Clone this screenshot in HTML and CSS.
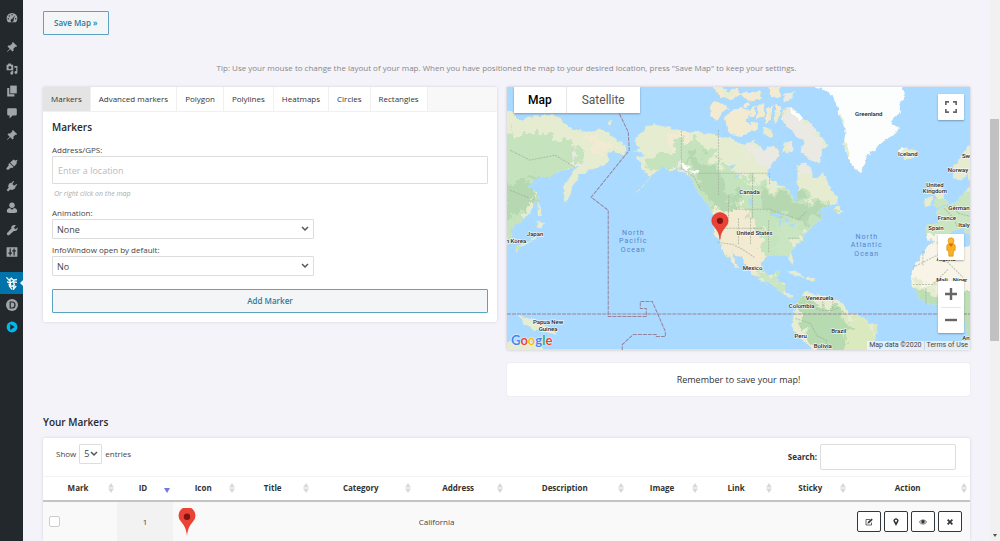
FILE: index.html
```
<!DOCTYPE html>
<html lang="en">
<head>
<meta charset="utf-8" />
<title>Edit Map</title>
<link rel="stylesheet" href="styles.css">
</head>
<body>
<nav class="sidebar" aria-label="Admin menu">
  <a href="#" class="menu-item" title="Dashboard"><svg viewBox="0 0 20 20"><path fill-rule="evenodd" d="M3.8 17h12.4A9 9 0 1 0 3.8 17zM10 3.500a1.200 1.200 0 1 1 0 2.400 1.200 1.200 0 0 1 0-2.400zM5.500 5.500a1.200 1.200 0 1 1 0 2.400 1.200 1.200 0 0 1 0-2.400zM3.800 10a1.200 1.200 0 1 1 0 2.400 1.200 1.200 0 0 1 0-2.400zM16.200 10a1.200 1.200 0 1 1 0 2.400 1.200 1.200 0 0 1 0-2.400zM15 5.500l-2.500 7.500a2.500 2.500 0 1 1-2.400-1.500z"/></svg></a>
  <a href="#" class="menu-item group" title="Posts"><svg viewBox="0 0 20 20"><path d="M11.500 1.500l7 7-1.500 1.500-1.300-.4-3.400 3.400.3 3.200-1.800 1.300-3.600-3.700L2 18.500 1.500 18l4.700-5.200L2.500 9.200 3.800 7.500l3.200.2 3.500-3.400-.4-1.400z"/></svg></a>
  <a href="#" class="menu-item" title="Media"><svg viewBox="0 0 20 20"><path fill-rule="evenodd" d="M1 3h2l1-2h4l1 2h3v9H1zM6.500 5a2.500 2.500 0 1 0 0 5 2.500 2.500 0 0 0 0-5z"/><path d="M14 5h5v11a2.400 2.400 0 1 1-2-2.500V8h-3zM9 13h3v4a2.400 2.400 0 1 1-2-2.300L9 14.500z"/></svg></a>
  <a href="#" class="menu-item" title="Pages"><svg viewBox="0 0 20 20"><path d="M7 1h11v13H7z"/><path d="M2 5h3.500v10.500H14V19H2z"/></svg></a>
  <a href="#" class="menu-item" title="Comments"><svg viewBox="0 0 20 20"><path d="M4 2h12a2 2 0 0 1 2 2v8a2 2 0 0 1-2 2h-5l-5 5v-5H4a2 2 0 0 1-2-2V4a2 2 0 0 1 2-2z"/></svg></a>
  <a href="#" class="menu-item" title="Projects"><svg viewBox="0 0 20 20"><path d="M11.500 1.500l7 7-1.500 1.500-1.300-.4-3.400 3.400.3 3.200-1.800 1.300-3.600-3.700L2 18.500 1.500 18l4.700-5.200L2.500 9.200 3.800 7.500l3.200.2 3.500-3.400-.4-1.400z"/></svg></a>
  <a href="#" class="menu-item group" title="Appearance"><svg viewBox="0 0 20 20"><path d="M12.500 2.500l3 1.500 4-1-2 4 .5 2-4.500 5L7 7.500zM6 8.500l6.500 6.500-1.800 1.800-2.500-.5L4 19.500c-2 1-4-1-3-3l3.500-4-.5-2z"/></svg></a>
  <a href="#" class="menu-item" title="Plugins"><svg viewBox="0 0 20 20"><path d="M12 1.500l1.500 1.200-3 4 3 3 4-3L18.700 8l-3.500 3.500.8 1.500c-2.500 3-6 4.500-9 2.800L3.500 19 1 16.500 4.500 13C2.500 10 4.500 6.500 7 4.500l1.500.8z"/></svg></a>
  <a href="#" class="menu-item" title="Users"><svg viewBox="0 0 20 20"><circle cx="10" cy="5.500" r="4.500"/><path d="M1.500 17v-3c0-2.500 3-4 5-4l3.500 3 3.500-3c2 0 5 1.500 5 4v3c-5 2-12 2-17 0z"/></svg></a>
  <a href="#" class="menu-item" title="Tools"><svg viewBox="0 0 20 20"><path d="M16.500 2.500L13.300 5.700l1 2 2 1L19.300 5.500c.8 4-2.500 7-6.300 6L5.500 18.500c-2 1.300-5-1.200-3.700-3.700L9 7.500C8 3.500 12 .5 16.500 2.500z"/></svg></a>
  <a href="#" class="menu-item" title="Settings"><svg viewBox="0 0 20 20"><path fill-rule="evenodd" d="M1 2h18v16H1zM6 4v7H4v2h2v3h2v-3h2v-2H8V4zM12.500 4v3h-2v2h2v7h2V9h2V7h-2V4z"/></svg></a>
  <a href="#" class="menu-item group active" title="Maps"><svg viewBox="0 0 20 20"><path fill="none" stroke="#fff" stroke-width="1.900" d="M2 2l4 4 3-3 3 3 5-1M3 8l4 2 4-2 6 1M5 12l5 3 4-3M7 6l1 7M12 6l1 6-1 7 4-5M6 14l4 5"/></svg></a>
  <a href="#" class="menu-item" title="Divi"><svg viewBox="0 0 20 20"><circle cx="10" cy="10" r="10"/><path fill="none" stroke="#23282d" stroke-width="2" d="M7 5h3a5 5 0 0 1 0 10H7z"/></svg></a>
  <a href="#" class="menu-item play" title="Videos"><svg viewBox="0 0 20 20"><circle cx="10" cy="10" r="9"/><path fill="#23282d" d="M7 5l7.500 5L7 15z"/></svg></a>
</nav>

<main class="content">
  <button type="button" class="btn save">Save Map »</button>
  <p class="tip">Tip: Use your mouse to change the layout of your map. When you have positioned the map to your desired location, press "Save Map" to keep your settings.</p>

  <div class="editor">
    <section class="card panel">
      <div class="tabs" role="tablist">
        <button type="button" role="tab" class="tab selected" aria-selected="true">Markers</button>
        <button type="button" role="tab" class="tab">Advanced markers</button>
        <button type="button" role="tab" class="tab">Polygon</button>
        <button type="button" role="tab" class="tab">Polylines</button>
        <button type="button" role="tab" class="tab">Heatmaps</button>
        <button type="button" role="tab" class="tab">Circles</button>
        <button type="button" role="tab" class="tab">Rectangles</button>
      </div>
      <form class="marker-form">
        <h2>Markers</h2>
        <label for="address">Address/GPS:</label>
        <input type="text" id="address" placeholder="Enter a location">
        <em class="hint">Or right click on the map</em>
        <label for="animation">Animation:</label>
        <select id="animation"><option>None</option><option>Bounce</option><option>Drop</option></select>
        <label for="infoopen">InfoWindow open by default:</label>
        <select id="infoopen"><option>No</option><option>Yes</option></select>
        <button type="button" class="btn add">Add Marker</button>
      </form>
    </section>

    <div class="map-column">
      <div class="map">
        <svg class="map-canvas" viewBox="507 87 462 262" preserveAspectRatio="xMidYMid slice" role="img" aria-label="World map">
          <defs>
            <filter id="rough" x="-5%" y="-5%" width="110%" height="110%">
              <feTurbulence type="fractalNoise" baseFrequency="0.18" numOctaves="3" seed="4" result="n"/>
              <feDisplacementMap in="SourceGraphic" in2="n" scale="5" xChannelSelector="R" yChannelSelector="G"/>
            </filter>
            <filter id="patch" x="-10%" y="-10%" width="120%" height="120%">
              <feTurbulence type="fractalNoise" baseFrequency="0.09" numOctaves="4" seed="9" result="n"/>
              <feDisplacementMap in="SourceGraphic" in2="n" scale="30" xChannelSelector="R" yChannelSelector="G"/>
            </filter>
            <clipPath id="land">
              <!-- Asia -->
              <path d="M500 108L513 112 517 120 522 121 528 117 540 116 547 114 555 116 562 118 563 123 575 130 585 132 600 129 610 134 617 140 626 146 627 151 624 156 618 152 613 150 608 153 609 160 606 164 598 167 590 170 580 174 577 180 572 186 570 195 566 202 564 201 563 190 567 180 574 169 578 165 568 169 555 172 550 177 540 176 533 181 527 187 532 189 536 193 535 205 530 212 525 218 517 224 512 229 511 232 513 240 509 245 500 244z"/>
              <path d="M538 195L540 208 541 216 538 215 537 203zM538 220L544 224 540 228 536 227zM537 230L536 238 528 243 520 247 516 252 516 247 524 243 532 239zM606 122l6-1-3 4z"/>
              <!-- Papua and Australia -->
              <path d="M519 315L530 318 541 322 551 328 558 335 545 331 533 330 523 323zM500 346L515 340 522 343 530 341 541 344 543 355 500 355z"/>
              <!-- North and Central America -->
              <path d="M633 150L640 148 636 144 634 139 641 132 648 126 654 123 660 126 672 128 690 133 697 130 704 135 712 134 720 137 730 138 737 143 745 145 752 140 759 147 764 150 771 145 777 148 780 155 772 162 768 170 766 175 772 181 782 186 790 190 791 199 795 202 796 196 798 188 797 180 797 165 805 163 811 168 812 176 817 178 822 172 826 180 831 190 837 197 838 203 831 205 822 208 815 213 822 213 820 219 812 226 805 232 801 240 795 246 790 250 792 258 793 265 789 261 787 255 780 255 772 255 765 257 761 264 763 272 769 275 775 272 779 270 776 279 783 282 786 292 793 296 790 298 782 293 773 285 762 281 752 273 746 265 741 258 734 253 730 249 732 256 739 268 735 266 727 256 722 249 719 241 714 233 712 216 709 205 700 196 694 183 686 173 678 170 668 169 662 167 655 172 650 178 642 188 632 195 645 184 649 177 648 172 640 170 641 164 636 156 645 155z"/>
              <path d="M832 210L838 205 843 212 838 215zM786 271L795 270 804 277 796 275zM806 277l10 1-3 3-8-1z"/>
              <!-- Arctic islands -->
              <path d="M711 103L718 102 728 108 722 113 716 121 710 116zM724 118L731 110 742 108 750 112 746 121 751 130 742 136 730 134 727 126zM713 87L722 86 726 91 736 88 741 94 731 100 720 96zM740 93L758 91 762 98 748 101zM757 105L765 104 763 116 756 121zM775 105L781 107 779 119 773 124zM783 109L792 108 800 115 811 124 819 134 827 145 821 149 818 163 810 160 800 151 803 142 795 135 785 126 781 118zM783 143l7-2 3 8-6 6-5-5zM768 88L780 85 779 98 770 97zM783 94l11-3-2 8-9 2zM750 122l9 1-2 7-8-1zM752 107l4-1-3 12-4-2zM767 108l5-2-2 14-5 4-1-6zM762 126l10 4-1 8-7-4zM744 103l6 1-3 4-4-1z"/>
              <path d="M812 80L815 88 823 89 832 95 836 105 840 118 845 130 843 145 846 155 851 165 860 173 864 165 866 155 875 149 882 141 892 135 899 128 890 124 893 118 900 113 898 105 904 97 901 90 903 80z"/>
              <path d="M897 150L905 147 916 151 914 157 904 160z"/>
              <!-- Europe and Africa -->
              <path d="M975 142L966 147 959 158 952 168 953 178 960 181 966 174 969 184 963 194 955 202 944 207 935 210 938 219 936 224 927 224 924 232 927 240 936 242 945 235 954 230 961 228 969 236 975 236zM933 182L940 185 942 196 947 203 937 208 932 205 936 198 931 190zM924 197l7 0 0 9-8 2z"/>
              <path d="M937 242L928 245 921 255 914 266 910 274 911 285 918 297 928 304 937 304 950 303 960 310 965 325 968 345 975 355 975 245 962 247 952 240z"/>
              <!-- South America -->
              <path d="M793 313L797 303 800 296 806 291 815 294 825 296 838 300 846 308 848 313 858 315 865 320 875 325 877 332 872 342 868 355 818 355 806 343 798 335 791 325z"/>
            </clipPath>
          </defs>
          <rect x="507" y="87" width="462" height="262" fill="#aadaff"/>
          <g filter="url(#rough)">
            <g clip-path="url(#land)">
              <rect x="490" y="70" width="500" height="300" fill="#e5ecd0"/>
              <g filter="url(#patch)">
                <path fill="#c5e3bd" d="M500 135h45l30 10 5 20-20 15-25 10-20 60h-20zM650 160l30-20 20 0 25 30 60 20 60 20-50 30-20 35-20-10-8-40-60-20-40-35z"/>
                <path fill="#b5d8b1" d="M500 185l35-10 5 25-40 20zM688 155l20 5 30 40-15 15-20-20zM755 185l30 10 50 15-20 10-50-10z"/>
                <path fill="#f2ead1" d="M585 138l20 0 12 12-20 4zM705 215l42-10 10 28 7 30-15 10-30-25zM705 95l70-15 15 20-40 40-40-10zM670 135l20-5-5 12-20 0z"/>
                <path fill="#c9e5c1" d="M775 225l30-5-15 40-15-5zM760 273l20 5 10 20-30-15zM920 205l60-20v55l-30-5-30 10z"/>
                <path fill="#ebe9e3" d="M745 150l20-5 35 20-8 12-20-2zM785 85l50 80-30 10-25-40zM676 165l12 3-2 7-12-3zM570 165l10-8 4 8z"/>
                <path fill="#b7dbb1" d="M795 296l40 10 25 20-10 30h-45z"/>
                <path fill="#dbe9bf" d="M845 315l35 10-10 35h-25z"/>
                <path fill="#f8f4e7" d="M900 238h80v57l-75-14z"/>
                <path fill="#bcdfb5" d="M905 288l40 5 40 0v60h-30z"/>
                <path fill="#f0ead0" d="M788 320l24 25v12h-30z"/>
              </g>
              <path fill="#fcfdfd" d="M805 75h110v60l-45 50-20-20z"/>
              <path fill="#e1ecca" d="M843 139l5 10-1 10-7-12zM840 112l4 10-5 2z"/>
              <path fill="#fff" d="M680 163l10 3-4 6zM690 170l8 1-3 4zM788 108l15 8-4 5z"/>
            </g>
          </g>
          <!-- lakes -->
          <path fill="#aadaff" d="M770 214l8-2 5 3-6 2zM779 218l2 1-1 7-2-1zM784 216l5 4-4 3zM788 225l7-2-3 4zM728 166l8-2-5 5zM733 177l9-5-6 6zM748 199l4-1 0 9-3-2z"/>
          <!-- borders -->
          <path fill="none" stroke="#9fae99" stroke-width="1" stroke-dasharray="2 1" stroke-opacity=".7" d="M681 131v37l12 8 8 15M692 173h76M718 130v66M728 196v22M752 173v45M735 209h34l14 5 15 5 8-8M717 242l15 2 10 5 12 8M769 173v12M738 218v26M750 218v26M720 228h45M768 220v32M788 238h12M510 150l20 10 25-5 20 12M510 190l25 10M808 297l3 10 10 3 10 0 8-3M795 318l15 5 6 12 10 5 0 10M822 298v10M832 300v8M912 267l30-15M922 251v14M912 284h20l15-15M940 255l22 22M945 290v14M925 288v16M955 285v20M943 208l10 10 3 8M953 205l4 8 12 3"/>
          <path class="dateline" d="M615 105l13 27 1 18-38 47 17 13v106h38v-8h-6v-7h12l13 30v5h-9v-2h-23l-11 10v10"/>
          <path class="dateline" d="M507 313.500h462"/>
          <g class="countries">
            <text x="535" y="236">Japan</text><text x="516" y="243">h Korea</text>
            <text x="548" y="324">Papua New</text><text x="548" y="330">Guinea</text>
            <text x="749" y="194">Canada</text><text x="754" y="235">United States</text><text x="752" y="270">Mexico</text>
            <text x="868" y="116">Greenland</text><text x="907" y="156">Iceland</text><text x="965" y="158">Sw</text>
            <text x="957" y="172">Norway</text><text x="934" y="187">United</text><text x="934" y="193">Kingdom</text>
            <text x="958" y="210">German</text><text x="946" y="220">France</text><text x="963" y="227">Italy</text>
            <text x="935" y="230">Spain</text><text x="945" y="261">Algeria</text><text x="941" y="282">Mali</text><text x="959" y="282">Niger</text>
            <text x="819" y="300">Venezuela</text><text x="801" y="308">Colombia</text><text x="838" y="332">Brazil</text>
            <text x="800" y="337">Peru</text><text x="822" y="347">Bolivia</text><text x="965" y="339">An</text>
          </g>
          <g class="oceans">
            <text x="633" y="235">North</text><text x="633" y="243">Pacific</text><text x="633" y="252">Ocean</text>
            <text x="866" y="239">North</text><text x="866" y="247">Atlantic</text><text x="866" y="256">Ocean</text>
          </g>
          <path fill="#ea4335" stroke="#c5221f" stroke-width=".5" d="M719.500 239c-.7-7-3-9-5.500-12.500a8.200 8.200 0 1 1 11 0c-2.500 3.500-4.800 5.500-5.500 12.500z"/>
          <circle cx="719.500" cy="220.500" r="3.100" fill="#811411"/>
        </svg>
        <div class="map-types">
          <button type="button" class="current">Map</button>
          <button type="button">Satellite</button>
        </div>
        <button type="button" class="map-btn fullscreen" aria-label="Toggle fullscreen"><svg viewBox="0 0 18 18" width="12" height="12"><path d="M0 0v6h2.500V2.500H6V0zm18 0v6h-2.500V2.500H12V0zM0 18v-6h2.500v3.500H6V18zm18 0v-6h-2.500v3.500H12V18z"/></svg></button>
        <div class="map-side">
          <button type="button" class="map-btn" aria-label="Street View"><svg viewBox="0 0 14 24" width="12" height="20"><path fill="#f9b21d" stroke="#d98c0e" stroke-width=".8" d="M4 8h6l2 2v6l-2 .5L9.500 23h-5L4 16.500 2 16v-6z"/><circle cx="7" cy="4.500" r="3.500" fill="#fbbc2a" stroke="#d98c0e" stroke-width=".8"/><path fill="#e8621c" d="M4 8h6l-3 4z"/></svg></button>
          <div class="zoom">
            <button type="button" aria-label="Zoom in"><svg viewBox="0 0 12 12" width="12" height="12"><path d="M4.800 0h2.400v4.800H12v2.400H7.200V12H4.800V7.200H0V4.800h4.800z"/></svg></button>
            <button type="button" aria-label="Zoom out"><svg viewBox="0 0 12 12" width="12" height="12"><path d="M0 4.800h12v2.400H0z"/></svg></button>
          </div>
        </div>
        <div class="google"><span class="b">G</span><span class="r">o</span><span class="y">o</span><span class="b">g</span><span class="g">l</span><span class="r">e</span></div>
        <div class="legal"><span>Map data ©2020</span><a href="#">Terms of Use</a></div>
      </div>
      <p class="notice">Remember to save your map!</p>
    </div>
  </div>

  <h2 class="list-title">Your Markers</h2>
  <section class="card">
    <div class="table-tools">
      <div class="length">
        <label for="entries">Show</label>
        <select id="entries"><option>5</option><option>10</option></select>
        <span>entries</span>
      </div>
      <div class="filter">
        <label for="search">Search:</label>
        <input type="search" id="search">
      </div>
    </div>
    <table class="markers">
      <colgroup>
        <col class="c-mark"><col class="c-id"><col class="c-icon"><col class="c-title"><col class="c-category"><col class="c-address"><col class="c-desc"><col class="c-image"><col class="c-link"><col class="c-sticky"><col class="c-action">
      </colgroup>
      <thead>
        <tr><th>Mark</th><th class="sorted">ID</th><th>Icon</th><th>Title</th><th>Category</th><th>Address</th><th>Description</th><th>Image</th><th>Link</th><th>Sticky</th><th>Action</th></tr>
      </thead>
      <tbody>
        <tr>
          <td class="left"><input type="checkbox" aria-label="Mark marker 1"></td>
          <td class="id">1</td>
          <td class="left"><svg class="pin" viewBox="0 0 18 28"><path fill="#ea4335" d="M9 28c-.8-8-3-10.500-6-14.500a8.500 8.500 0 1 1 12 0c-3 4-5.200 6.500-6 14.500z"/><circle cx="9" cy="8.800" r="3.200" fill="#811411"/></svg></td>
          <td></td><td></td>
          <td class="left">California</td>
          <td></td><td></td><td></td><td></td>
          <td>
            <div class="actions">
              <button type="button" aria-label="Edit"><svg viewBox="0 0 16 16"><path fill="none" stroke="#32373c" stroke-width="1.500" d="M13 9v5H2V3h8"/><path d="M5 11l.7-3L13 1l2.500 2.500-7.300 7.200z"/></svg></button>
              <button type="button" aria-label="Locate"><svg viewBox="0 0 16 16"><path fill-rule="evenodd" d="M8 16L4 8.500a5 5 0 1 1 8 0zM8 3.500a2.200 2.200 0 1 0 0 4.400 2.200 2.200 0 0 0 0-4.400z"/></svg></button>
              <button type="button" aria-label="View"><svg viewBox="0 0 16 16"><path fill="none" stroke="#32373c" stroke-width="1.400" d="M.8 8c3.500-5.500 11-5.500 14.400 0-3.400 5.500-10.900 5.500-14.400 0z"/><circle cx="8" cy="7.500" r="3.600"/></svg></button>
              <button type="button" aria-label="Delete"><svg viewBox="0 0 16 16"><path d="M2 4.500L4.500 2 8 5.500 11.500 2 14 4.500 10.500 8l3.500 3.500-2.500 2.500L8 10.500 4.500 14 2 11.500 5.500 8z"/></svg></button>
            </div>
          </td>
        </tr>
      </tbody>
    </table>
  </section>
</main>

<div class="scrollbar" aria-hidden="true"><div class="thumb"></div><div class="arrow"></div></div>
</body>
</html>
```

FILE: styles.css
```
* {
  box-sizing: border-box;
}
body {
  display: flex;
  height: 100vh;
  margin: 0;
  overflow: hidden;
  background: #f4f3f9;
  color: #444;
  font-family: "Open Sans", "Noto Sans", sans-serif;
  font-size: 8px;
  line-height: 12px;
}
button, input, select {
  margin: 0;
  font-family: inherit;
  font-size: inherit;
  color: inherit;
}
h2 {
  margin: 0;
  font-size: 10px;
  font-weight: 600;
  line-height: 14px;
  color: #23282d;
}

/* sidebar */
.sidebar {
  flex: 0 0 23px;
  padding-top: 7px;
  background: #23282d;
}
.menu-item {
  position: relative;
  display: flex;
  align-items: center;
  justify-content: center;
  height: 22px;
}
.menu-item svg {
  width: 12px;
  height: 12px;
  fill: #a0a5aa;
}
.menu-item.group {
  margin-top: 7px;
}
.menu-item.active {
  margin-top: 9px;
  background: #0073aa;
}
.menu-item.active svg {
  width: 14px;
  height: 14px;
}
.menu-item.active::after {
  content: "";
  position: absolute;
  right: 0;
  border: 3px solid transparent;
  border-right-color: #f4f3f9;
  border-left: 0;
}
.menu-item.play svg {
  fill: #00b9eb;
}

/* page */
.content {
  flex: 1;
  min-width: 0;
  padding: 11px 20px 0;
}
.btn {
  border: 1px solid #5ba3c0;
  border-radius: 1px;
  background: #f3f5f6;
  color: #2a7ba0;
  font-weight: 600;
  line-height: 12px;
  padding: 5px 10px;
}
.btn.save {
  display: block;
}
.tip {
  margin: 27px 0 13px;
  text-align: center;
  color: #888;
}
.editor {
  display: grid;
  grid-template-columns: 454fr 463fr;
  gap: 10px;
  align-items: start;
}
.card {
  background: #fff;
  border-radius: 2px;
  box-shadow: 0 0 3px rgba(0, 0, 0, 0.15);
}
.tabs {
  display: flex;
  background: #f8f8f8;
  border-bottom: 1px solid #f0f0f0;
}
.tab {
  padding: 6px 8px;
  border: 0;
  border-right: 1px solid #f0f0f0;
  background: #fff;
  color: #333;
  line-height: 12px;
}
.tab.selected {
  background: #e4e4e4;
}
.marker-form {
  display: flex;
  flex-direction: column;
  padding: 8px 9px 9px;
}
.marker-form h2 {
  margin-bottom: 10px;
}
.marker-form input, .marker-form select {
  border: 1px solid #ddd;
  border-radius: 1px;
  background-color: #fff;
  font-size: 9px;
}
.marker-form input {
  height: 28px;
  padding: 0 5px;
}
.marker-form input::placeholder {
  color: #bbb;
}
.hint {
  margin: 5px 2px 8px;
  font-size: 7px;
  line-height: 10px;
  color: #aaa;
}
select {
  appearance: none;
  background: #fff url("data:image/svg+xml,%3Csvg xmlns='http://www.w3.org/2000/svg' width='8' height='8' viewBox='0 0 8 8'%3E%3Cpath d='M1 2l3 3 3-3' fill='none' stroke='%23555' stroke-width='1.500'/%3E%3C/svg%3E") no-repeat right 4px center;
}
.marker-form select {
  width: 60%;
  height: 20px;
  margin-bottom: 5px;
  padding: 0 4px;
}
.btn.add {
  margin-top: 8px;
}

/* map */
.map-column {
  min-width: 0;
}
.map {
  position: relative;
  display: flex;
  overflow: hidden;
  box-shadow: 0 0 3px rgba(0, 0, 0, 0.2);
  font-family: Roboto, sans-serif;
}
.map-canvas {
  width: 100%;
}
.dateline {
  fill: none;
  stroke: #97839b;
  stroke-width: 1;
  stroke-dasharray: 4 1;
}
.countries text {
  font-size: 6px;
  font-weight: 500;
  fill: #222;
  stroke: #fff;
  stroke-width: 1px;
  paint-order: stroke;
  text-anchor: middle;
}
.oceans text {
  font-size: 7px;
  letter-spacing: 1px;
  fill: #5584c8;
  text-anchor: middle;
}
.map button {
  display: flex;
  align-items: center;
  justify-content: center;
  border: 0;
  background: #fff;
}
.map button svg {
  fill: #666;
}
.map-types {
  position: absolute;
  top: 0;
  left: 7px;
  display: flex;
  box-shadow: 0 1px 2px rgba(0, 0, 0, 0.3);
}
.map .map-types button {
  height: 26px;
  padding: 0 15px;
  font-size: 12px;
  color: #565656;
}
.map .map-types .current {
  padding: 0 14px;
  border-right: 1px solid #e6e6e6;
  color: #000;
  font-weight: 500;
}
.map-btn, .zoom {
  width: 26px;
  border-radius: 1px;
  box-shadow: 0 1px 2px rgba(0, 0, 0, 0.3);
}
.map-btn {
  height: 26px;
  padding: 0;
}
.fullscreen {
  position: absolute;
  top: 7px;
  right: 6px;
}
.map-side {
  position: absolute;
  right: 6px;
  bottom: 17px;
  display: grid;
  gap: 21px;
}
.zoom {
  background: #fff;
}
.zoom button {
  width: 20px;
  height: 26px;
  margin: 0 auto;
  padding: 0;
}
.map .zoom button + button {
  border-top: 1px solid #e6e6e6;
}
.google {
  position: absolute;
  left: 4px;
  bottom: 3px;
  font-family: Lato, sans-serif;
  font-size: 13px;
  font-weight: 700;
  line-height: 14px;
  text-shadow: 0 0 2px #fff, 0 0 1px #fff;
}
.google .b { color: #4285f4; }
.google .r { color: #ea4335; }
.google .y { color: #fbbc05; }
.google .g { color: #34a853; }
.legal {
  position: absolute;
  right: 0;
  bottom: 0;
  display: flex;
  background: rgba(245, 245, 245, 0.75);
  font-size: 7px;
  line-height: 9px;
}
.legal span, .legal a {
  padding: 0 2px;
  color: #444;
  text-decoration: none;
}
.legal a {
  border-left: 1px solid #ccd6dc;
}
.notice {
  margin: 13px 0 0;
  padding: 10px;
  background: #fff;
  border-radius: 2px;
  box-shadow: 0 0 1px rgba(0, 0, 0, 0.2);
  text-align: center;
  font-size: 9px;
  line-height: 13px;
  color: #333;
}

/* markers list */
.list-title {
  margin: 19px 0 9px;
}
.table-tools {
  display: flex;
  justify-content: space-between;
  align-items: flex-start;
  padding: 6px 14px 6px 13px;
}
.length, .filter {
  display: flex;
  align-items: center;
  gap: 3px;
}
.length select {
  width: 23px;
  height: 20px;
  padding: 0 4px;
  border: 1px solid #ddd;
  border-radius: 1px;
  background-position: right 3px center;
  font-size: 9px;
}
.filter label {
  font-weight: 700;
  color: #333;
}
.filter input {
  width: 136px;
  height: 26px;
  border: 1px solid #ddd;
  border-radius: 2px;
  background: #fff;
}
.markers {
  width: 100%;
  table-layout: fixed;
  border-collapse: collapse;
  border-top: 1px solid #f4f4f4;
  text-align: center;
}
.c-mark { width: 8%; }
.c-id { width: 6%; }
.c-icon { width: 7%; }
.c-title { width: 8%; }
.c-category { width: 11%; }
.c-address { width: 10%; }
.c-desc { width: 13%; }
.c-image { width: 8%; }
.c-link { width: 8%; }
.c-sticky { width: 8%; }
.c-action { width: 13%; }
.markers th {
  height: 25px;
  padding: 0 4px 0 0;
  border-bottom: 2px solid #c4c4c4;
  background: url("data:image/svg+xml,%3Csvg xmlns='http://www.w3.org/2000/svg' width='6' height='10' viewBox='0 0 6 10'%3E%3Cpath d='M0 4.500L3 0l3 4.500zM0 5.500h6L3 10z' fill='%23d8d8d8'/%3E%3C/svg%3E") no-repeat right 3px center;
  font-weight: 700;
  color: #333;
}
.markers th.sorted {
  background-image: url("data:image/svg+xml,%3Csvg xmlns='http://www.w3.org/2000/svg' width='6' height='10' viewBox='0 0 6 10'%3E%3Cpath d='M0 5h6L3 10z' fill='%237577e0'/%3E%3C/svg%3E");
}
.markers td {
  height: 40px;
  padding: 0 5px;
  background: #f9f9f9;
}
.markers td.id {
  background: #f2f2f2;
}
.markers td.left {
  text-align: left;
}
.markers input {
  display: block;
  appearance: none;
  width: 11px;
  height: 11px;
  margin-left: 1px;
  border: 1px solid #ccc;
  border-radius: 2px;
  background: #fff;
}
.pin {
  display: block;
  width: 18px;
  height: 28px;
}
.actions {
  display: flex;
  justify-content: flex-end;
  gap: 3px;
  padding-right: 3px;
}
.actions button {
  display: flex;
  align-items: center;
  justify-content: center;
  width: 24px;
  height: 21px;
  padding: 0;
  border: 1px solid #32373c;
  border-radius: 2px;
  background: #fff;
}
.actions svg {
  width: 8px;
  height: 8px;
  fill: #32373c;
}

/* scrollbar */
.scrollbar {
  flex: 0 0 10px;
  display: grid;
  grid-template-rows: 22% 41% 1fr;
  background: #f1f1f1;
}
.thumb {
  grid-row: 2;
  margin-right: 1px;
  background: #c1c1c1;
}
.arrow {
  grid-row: 3;
  align-self: end;
  justify-self: center;
  margin-bottom: 4px;
  border: 2px solid transparent;
  border-top: 3px solid #505050;
  border-bottom: 0;
}
```
